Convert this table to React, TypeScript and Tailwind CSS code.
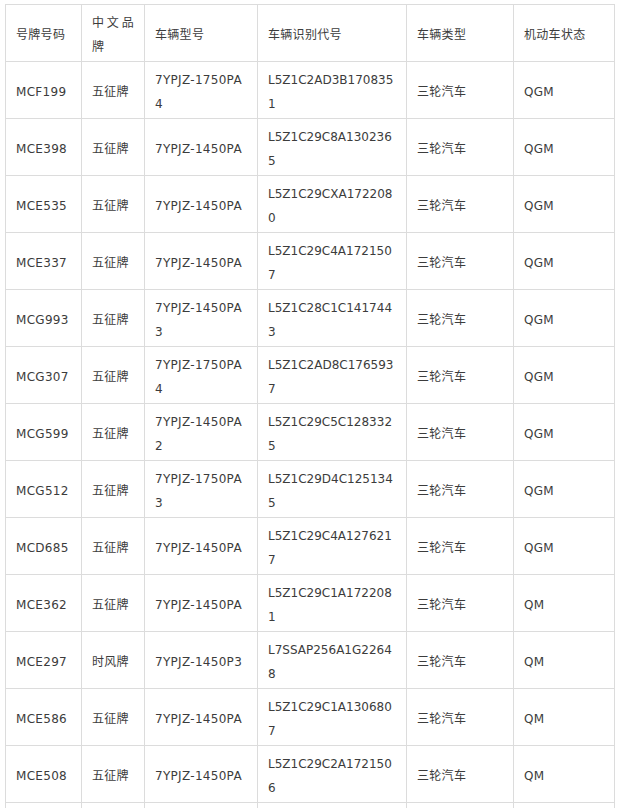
import React from 'react';

type Row = {
  plate: string;
  brand: string;
  model: string;
  vin: string;
  type: string;
  status: string;
};

const rows: Row[] = [
  { plate: 'MCF199', brand: '五征牌', model: '7YPJZ-1750PA4', vin: 'L5Z1C2AD3B1708351', type: '三轮汽车', status: 'QGM' },
  { plate: 'MCE398', brand: '五征牌', model: '7YPJZ-1450PA', vin: 'L5Z1C29C8A1302365', type: '三轮汽车', status: 'QGM' },
  { plate: 'MCE535', brand: '五征牌', model: '7YPJZ-1450PA', vin: 'L5Z1C29CXA1722080', type: '三轮汽车', status: 'QGM' },
  { plate: 'MCE337', brand: '五征牌', model: '7YPJZ-1450PA', vin: 'L5Z1C29C4A1721507', type: '三轮汽车', status: 'QGM' },
  { plate: 'MCG993', brand: '五征牌', model: '7YPJZ-1450PA3', vin: 'L5Z1C28C1C1417443', type: '三轮汽车', status: 'QGM' },
  { plate: 'MCG307', brand: '五征牌', model: '7YPJZ-1750PA4', vin: 'L5Z1C2AD8C1765937', type: '三轮汽车', status: 'QGM' },
  { plate: 'MCG599', brand: '五征牌', model: '7YPJZ-1450PA2', vin: 'L5Z1C29C5C1283325', type: '三轮汽车', status: 'QGM' },
  { plate: 'MCG512', brand: '五征牌', model: '7YPJZ-1750PA3', vin: 'L5Z1C29D4C1251345', type: '三轮汽车', status: 'QGM' },
  { plate: 'MCD685', brand: '五征牌', model: '7YPJZ-1450PA', vin: 'L5Z1C29C4A1276217', type: '三轮汽车', status: 'QGM' },
  { plate: 'MCE362', brand: '五征牌', model: '7YPJZ-1450PA', vin: 'L5Z1C29C1A1722081', type: '三轮汽车', status: 'QM' },
  { plate: 'MCE297', brand: '时风牌', model: '7YPJZ-1450P3', vin: 'L7SSAP256A1G22648', type: '三轮汽车', status: 'QM' },
  { plate: 'MCE586', brand: '五征牌', model: '7YPJZ-1450PA', vin: 'L5Z1C29C1A1306807', type: '三轮汽车', status: 'QM' },
  { plate: 'MCE508', brand: '五征牌', model: '7YPJZ-1450PA', vin: 'L5Z1C29C2A1721506', type: '三轮汽车', status: 'QM' },
];

const headers = ['号牌号码', '中文品牌', '车辆型号', '车辆识别代号', '车辆类型', '机动车状态'];

const cell =
  'border border-[#dcdcdc] px-[10px] pt-[6px] pb-[2px] h-[57px] align-middle text-justify break-all leading-6 tracking-[0.3px]';
// the VIN column is set a touch tighter so 16 characters fit on the first line
const vinCell =
  'border border-[#dcdcdc] px-[10px] pt-[6px] pb-[2px] h-[57px] align-middle text-justify break-all leading-6 tracking-normal';

export default function App() {
  return (
    <div
      className="bg-white pt-1 pl-[5px] text-[12px] text-[#3c3c3c]"
      style={{ fontFamily: '"DejaVu Sans", "Noto Sans CJK SC", sans-serif' }}
    >
      <table className="table-fixed border-collapse w-[609px]">
        <colgroup>
          <col className="w-[76px]" />
          <col className="w-[63px]" />
          <col className="w-[113px]" />
          <col className="w-[149px]" />
          <col className="w-[107px]" />
          <col className="w-[101px]" />
        </colgroup>
        <thead>
          <tr>
            {headers.map((h) => (
              <th key={h} className={`${cell} font-normal`}>
                {h}
              </th>
            ))}
          </tr>
        </thead>
        <tbody>
          {rows.map((r) => (
            <tr key={r.plate}>
              <td className={cell}>{r.plate}</td>
              <td className={cell}>{r.brand}</td>
              <td className={cell}>{r.model}</td>
              <td className={vinCell}>{r.vin}</td>
              <td className={cell}>{r.type}</td>
              <td className={cell}>{r.status}</td>
            </tr>
          ))}
          {/* next row, only its top edge is in view */}
          <tr>
            {headers.map((h) => (
              <td key={h} className={cell} />
            ))}
          </tr>
        </tbody>
      </table>
    </div>
  );
}
